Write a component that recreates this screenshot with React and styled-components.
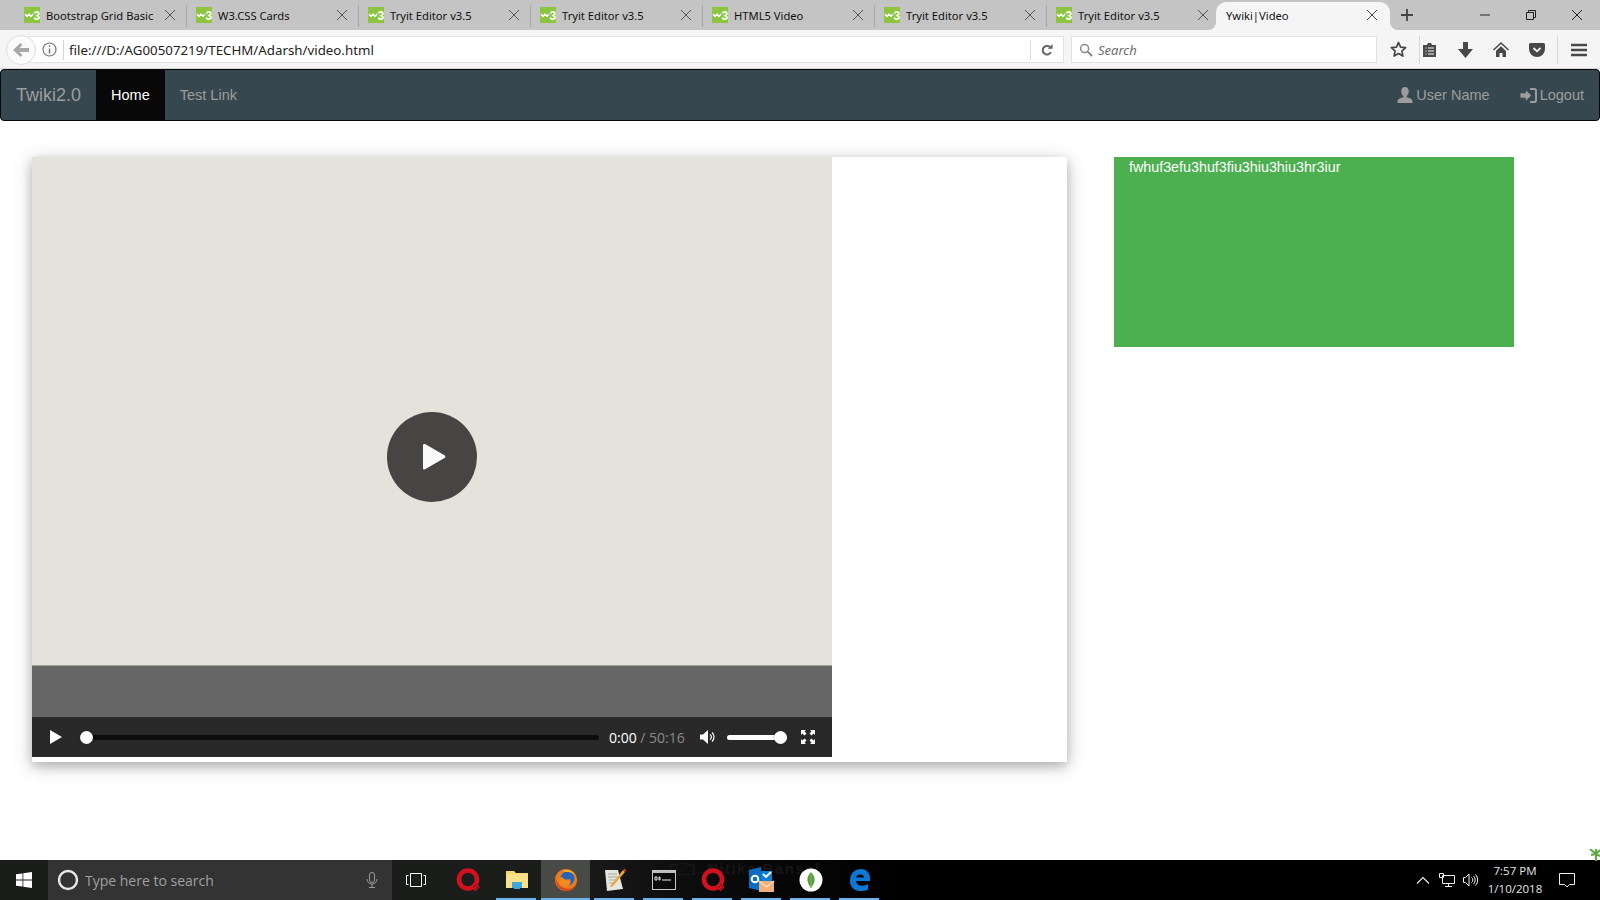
import React from "react";
import styled, { createGlobalStyle } from "styled-components";

const GlobalStyle = createGlobalStyle`
  html, body {
    margin: 0;
    padding: 0;
    background: #fff;
  }
  body {
    font-family: "Liberation Sans", Arial, sans-serif;
    overflow: hidden;
  }
  * { box-sizing: border-box; }
`;

//#region Browser chrome
const Page = styled.div`
  width: 1600px;
  height: 900px;
  display: flex;
  flex-direction: column;
  overflow: hidden;
`;

const TabStrip = styled.div`
  height: 30px;
  flex: none;
  display: flex;
  background: #c4c4c4;
  padding-left: 15px;
`;

const Tab = styled.div`
  width: 172px;
  height: 22px;
  margin-top: 5px;
  flex: none;
  display: flex;
  align-items: center;
  padding: 0 10px 2px 9px;
  font-family: "Noto Sans", sans-serif;
  font-size: 11.2px;
  color: #111;
  border-right: ${(p) => (p.$last ? "none" : "1px solid #a6a6a6")};
`;

const ActiveTab = styled(Tab)`
  width: 174px;
  height: 28px;
  margin: 2px 0 0 -3px;
  padding: 0 12px 2px 4px;
  border-right: none;
  background: #f5f5f5;
  border-radius: 10px 10px 0 0;
  position: relative;
  &::before,
  &::after {
    content: "";
    position: absolute;
    bottom: 0;
    width: 8px;
    height: 8px;
  }
  &::before {
    left: -8px;
    background: radial-gradient(circle at 0 0, transparent 7.5px, #f5f5f5 8.5px);
  }
  &::after {
    right: -8px;
    background: radial-gradient(circle at 100% 0, transparent 7.5px, #f5f5f5 8.5px);
  }
`;

const TabTitle = styled.span`
  margin-left: 6px;
  flex: 1;
  white-space: nowrap;
`;

const Favicon = styled.svg`
  width: 16px;
  height: 16px;
  flex: none;
`;

const NewTab = styled.div`
  width: 34px;
  display: flex;
  align-items: center;
  justify-content: center;
  color: #444;
`;

const WindowButtons = styled.div`
  margin-left: auto;
  display: flex;
`;

const WindowButton = styled.div`
  width: 46px;
  height: 30px;
  display: flex;
  align-items: center;
  justify-content: center;
`;

const Toolbar = styled.div`
  height: 39px;
  flex: none;
  display: flex;
  align-items: center;
  background: #f5f5f5;
  padding: 1px 0 0 6px;
  border-bottom: 1px solid #d8d8d8;
`;

const BackButton = styled.div`
  width: 30px;
  height: 30px;
  flex: none;
  border-radius: 50%;
  border: 1px solid #dedede;
  background: #fbfbfb;
  display: flex;
  align-items: center;
  justify-content: center;
  margin-right: -9px;
  position: relative;
`;

const UrlBar = styled.div`
  width: 1037px;
  height: 27px;
  flex: none;
  display: flex;
  align-items: center;
  background: #fff;
  border: 1px solid #e2e2e2;
  border-left: none;
  padding-left: 15px;
  font-family: "Noto Sans", sans-serif;
  font-size: 13.3px;
  color: #222;
`;

const InfoDivider = styled.span`
  width: 1px;
  height: 20px;
  background: #d5d5d5;
  margin: 0 5px 0 6px;
`;

const UrlText = styled.span`
  flex: 1;
  white-space: nowrap;
`;

const ReloadBox = styled.div`
  width: 33px;
  height: 20px;
  border-left: 1px solid #dcdcdc;
  display: flex;
  align-items: center;
  justify-content: center;
`;

const SearchBar = styled.div`
  width: 306px;
  height: 27px;
  flex: none;
  margin-left: 7px;
  display: flex;
  align-items: center;
  gap: 5px;
  padding-left: 7px;
  background: #fff;
  border: 1px solid #e2e2e2;
  font-family: "Noto Sans", sans-serif;
  font-size: 13px;
  font-style: italic;
  color: #6d6d6d;
`;

const ToolIcon = styled.div`
  width: ${(p) => p.$w || 36}px;
  height: 28px;
  flex: none;
  margin-left: ${(p) => p.$ml || 0}px;
  display: flex;
  align-items: center;
  justify-content: center;
  border-left: ${(p) => (p.$divided ? "1px solid #d6d6d6" : "none")};
`;
//#endregion

//#region Navbar
const Navbar = styled.nav`
  height: 52px;
  flex: none;
  display: flex;
  background: #37474f;
  border: 1px solid #080808;
  border-radius: 4px;
`;

const Brand = styled.a`
  padding: 0 15px;
  font-size: 18px;
  line-height: 50px;
  color: #9d9d9d;
`;

const NavLink = styled.a`
  padding: 0 15px;
  font-size: 14.5px;
  line-height: 50px;
  color: ${(p) => (p.$active ? "#fff" : "#9d9d9d")};
  background: ${(p) => (p.$active ? "#080808" : "transparent")};
  display: flex;
  align-items: center;
  gap: ${(p) => (p.$gap ? "3px" : "0")};
`;

const NavRight = styled.div`
  margin-left: auto;
  display: flex;
`;
//#endregion

//#region Content
const Main = styled.main`
  flex: 1;
  display: flex;
  align-items: flex-start;
  padding: 36px 0 0 32px;
  background: #fff;
`;

const Card = styled.div`
  width: 1035px;
  height: 605px;
  flex: none;
  padding-bottom: 5px;
  background: #fff;
  box-shadow: 0 4px 10px 0 rgba(0, 0, 0, 0.2), 0 4px 20px 0 rgba(0, 0, 0, 0.19);
`;

const Video = styled.div`
  width: 800px;
  height: 600px;
  display: flex;
  flex-direction: column;
  position: relative;
`;

const Poster = styled.div`
  flex: 1;
  background: #e3e2db;
`;

const Band = styled.div`
  height: 52px;
  flex: none;
  background: #666;
  border-top: 1px solid #a3a29b;
`;

const Controls = styled.div`
  height: 40px;
  flex: none;
  display: flex;
  align-items: center;
  padding-left: 18px;
  background: #292929;
  font-family: "Open Sans", sans-serif;
  font-size: 14px;
  color: #fff;
`;

const BigPlay = styled.div`
  position: absolute;
  left: 355px;
  top: 255px;
  width: 90px;
  height: 90px;
  border-radius: 50%;
  background: #474543;
  display: flex;
  align-items: center;
  justify-content: center;
  padding-left: 4px;
`;

const Seek = styled.div`
  width: 519px;
  height: 5px;
  margin-left: 18px;
  border-radius: 3px;
  background: #0c0c0c;
  position: relative;
  flex: none;
`;

const Thumb = styled.span`
  position: absolute;
  top: 50%;
  left: ${(p) => p.$left}px;
  width: 13px;
  height: 13px;
  margin-top: -6.5px;
  border-radius: 50%;
  background: #fff;
  box-shadow: 0 0 2px rgba(0, 0, 0, 0.5);
`;

const Time = styled.span`
  margin-left: 10px;
  white-space: nowrap;
  width: 91px;
`;

const Duration = styled.span`
  color: #8a8a8a;
`;

const Volume = styled.div`
  width: 60px;
  height: 5px;
  margin-left: 11px;
  border-radius: 3px;
  background: #fff;
  position: relative;
  flex: none;
`;

const ControlIcon = styled.svg`
  flex: none;
  margin-left: ${(p) => p.$ml || 0}px;
`;

const Note = styled.div`
  width: 400px;
  height: 190px;
  flex: none;
  margin-left: 47px;
  padding: 0 15px;
  background: #4caf50;
  color: #fff;
  font-size: 14.3px;
  line-height: 20px;
`;
//#endregion

//#region Taskbar
const Taskbar = styled.footer`
  height: 40px;
  flex: none;
  display: flex;
  background: linear-gradient(90deg, #1b1d1b 0, #1b1d1b 560px, #0b0b0b 700px, #000 900px);
  position: relative;
`;

const StartButton = styled.div`
  width: 48px;
  display: flex;
  align-items: center;
  justify-content: center;
  flex: none;
`;

const TaskSearch = styled.div`
  width: 344px;
  flex: none;
  display: flex;
  align-items: center;
  background: #333;
  padding-left: 9px;
  font-family: "Open Sans", sans-serif;
  font-size: 14px;
  color: #a0a0a0;
`;

const SearchHint = styled.span`
  margin-left: 6px;
  flex: 1;
`;

const MicIcon = styled.svg`
  margin-right: 14px;
`;

const TaskItem = styled.div`
  width: 49px;
  flex: none;
  display: flex;
  align-items: center;
  justify-content: center;
  position: relative;
  background: ${(p) => (p.$active ? "#474a47" : "transparent")};
  &::after {
    content: "";
    display: ${(p) => (p.$running ? "block" : "none")};
    position: absolute;
    left: ${(p) => (p.$active ? "0" : "4px")};
    right: ${(p) => (p.$active ? "0" : "5px")};
    bottom: 0;
    height: 2px;
    background: #6cb2eb;
  }
`;

const TaskViewItem = styled(TaskItem)`
  width: 51px;
  padding-right: 4px;
`;

const Watermark = styled.div`
  position: absolute;
  left: 670px;
  top: 2px;
  display: flex;
  align-items: center;
  gap: 12px;
  font-family: "Liberation Sans", sans-serif;
  font-size: 15px;
  font-weight: bold;
  letter-spacing: 1.5px;
  line-height: 13px;
  color: #161616;
`;

const Tray = styled.div`
  margin-left: auto;
  display: flex;
  padding-right: 13px;
`;

const TrayItem = styled.div`
  width: 24px;
  display: flex;
  align-items: center;
  justify-content: center;
`;

const Clock = styled.div`
  width: 64px;
  display: flex;
  flex-direction: column;
  align-items: center;
  justify-content: center;
  font-family: "Open Sans", sans-serif;
  font-size: 11.5px;
  line-height: 18px;
  color: #e6e6e6;
`;

const Notify = styled.div`
  width: 40px;
  display: flex;
  align-items: center;
  justify-content: center;
`;

const Palm = styled.svg`
  position: absolute;
  right: 0;
  top: -11px;
`;
//#endregion

const W3Icon = () => (
  <Favicon viewBox="0 0 16 16">
    <rect width="16" height="16" fill="#8cc63f" />
    <path d="M1 7l2 2.4L5 7l2 2.4L9 7" fill="none" stroke="#fff" strokeWidth="1.3" />
    <text x="9.5" y="12.5" fontSize="12" fontWeight="bold" fontFamily="Liberation Sans" fill="#fff">3</text>
  </Favicon>
);

const OperaIcon = () => (
  <svg width="26" height="26" viewBox="0 0 26 26">
    <circle cx="13" cy="12.5" r="9" fill="none" stroke="#d3111e" strokeWidth="4.6" />
    <rect x="17.5" y="17" width="6" height="6" transform="rotate(45 20.5 20)" fill="#d3111e" />
    <path d="M18.5 20.500l3-3M20.500 22.500l3-3" stroke="#1b1d1b" strokeWidth="0.8" />
  </svg>
);

const FolderIcon = () => (
  <svg width="24" height="24" viewBox="0 0 24 24">
    <path d="M1 3h8l2 2h12v15H1z" fill="#f7d774" />
    <rect x="1" y="6" width="22" height="14" fill="#fbe08a" />
    <path d="M7 20v-6h10v6h-3v-3h-4v3z" fill="#3da7dc" />
    <rect x="9" y="17" width="6" height="4" fill="#3da7dc" />
  </svg>
);

const FirefoxIcon = () => (
  <svg width="24" height="24" viewBox="0 0 24 24">
    <circle cx="12" cy="12" r="11" fill="#ee7a1e" />
    <circle cx="13.500" cy="10.500" r="7" fill="#2a63b3" />
    <path d="M9 3c4-2.500 10-.5 12.500 5-3-3.500-6-4.500-9-4-1.500.3-2.500 0-3.500-1z" fill="#f9b233" />
    <path d="M8 9c2 3 6 3 8 2 2 3-.5 7-4 7.500-4 .5-7-2.500-7-6.500 0-1.500 1-2.500 3-3z" fill="#f28a21" />
    <path d="M1.500 10C1 16 5 22.500 12 23c5 .3 8.500-2.500 10-6-3 3.500-7 4.500-11 3.500C6 19 3 15 1.500 10z" fill="#d9471d" />
  </svg>
);

const NotepadIcon = () => (
  <svg width="24" height="26" viewBox="0 0 24 26">
    <path d="M2 3h13l5 19-16 2z" fill="#e6e6e0" />
    <path d="M5 7h9M5 10h10M6 13h8M6 16h5" stroke="#a9a9a0" strokeWidth="1" />
    <path d="M8 18L20 3l2 2L10 19l-3 1.500z" fill="#e6a83a" />
    <path d="M20 3l1.500-1.500 2 2L22 5z" fill="#c0392b" />
  </svg>
);

const CmdIcon = () => (
  <svg width="24" height="20" viewBox="0 0 24 20">
    <rect x="0.5" y="0.5" width="23" height="19" fill="#0a0a0a" stroke="#c8c8c8" />
    <rect x="1" y="1" width="22" height="2" fill="#bdbdbd" />
    <path d="M3 7h2v3H3zM7 7h1v3H7zM10 10h9" stroke="#e8e8e8" strokeWidth="1" fill="none" />
  </svg>
);

const OutlookIcon = () => (
  <svg width="28" height="28" viewBox="0 0 28 28">
    <path d="M1 4l12-3v24L1 22z" fill="#0a6cc4" />
    <rect x="13" y="5" width="11" height="10" fill="#0f7fd8" />
    <circle cx="7" cy="13" r="3.300" fill="none" stroke="#fff" strokeWidth="2" />
    <path d="M15 8l3 3 5-5" fill="none" stroke="#fff" strokeWidth="1.800" />
    <rect x="11" y="15" width="15" height="11" fill="#f0b27a" />
    <path d="M11 15l7.500 6 7.500-6" fill="none" stroke="#fbe3c8" strokeWidth="1.200" />
  </svg>
);

const MongoIcon = () => (
  <svg width="24" height="24" viewBox="0 0 24 24">
    <circle cx="12" cy="12" r="11.500" fill="#fff" />
    <path d="M12 4c3 3 4 6 3.500 9-.5 3-2 4.500-3.500 7-1.500-2.500-3-4-3.500-7C8 10 9 7 12 4z" fill="#5a9e3e" />
    <path d="M12 5v15" stroke="#8dbb6e" strokeWidth="0.8" />
  </svg>
);

const EdgeIcon = () => (
  <svg width="22" height="24" viewBox="0 0 22 24">
    <path d="M1 13C1 5 6 1 12 1c6 0 9 4.500 9 10v2H7c.2 4.500 6.500 6.500 12 3v5.500c-7 3.500-18 1.500-18-8.500zM7 9.500h8c0-4-7.500-4-8 0z" fill="#0a78d7" fillRule="evenodd" />
  </svg>
);

const tabs = [
  "Bootstrap Grid Basic",
  "W3.CSS Cards",
  "Tryit Editor v3.5",
  "Tryit Editor v3.5",
  "HTML5 Video",
  "Tryit Editor v3.5",
  "Tryit Editor v3.5",
];

const CloseX = ({ color = "#555" }) => (
  <svg width="12" height="12" viewBox="0 0 12 12">
    <path d="M1 1l10 10M11 1L1 11" stroke={color} strokeWidth="1" />
  </svg>
);

const App = () => {
  return (
    <Page>
      <GlobalStyle />
      <TabStrip>
        {tabs.map((title, i) => (
          <Tab key={i} $last={i === tabs.length - 1}>
            <W3Icon />
            <TabTitle>{title}</TabTitle>
            <CloseX />
          </Tab>
        ))}
        <ActiveTab>
          <TabTitle>Ywiki|Video</TabTitle>
          <CloseX color="#444" />
        </ActiveTab>
        <NewTab>
          <svg width="14" height="14" viewBox="0 0 14 14">
            <path d="M7 1v12M1 7h12" stroke="#444" strokeWidth="1.800" />
          </svg>
        </NewTab>
        <WindowButtons>
          <WindowButton>
            <svg width="12" height="12" viewBox="0 0 12 12">
              <path d="M1 6h10" stroke="#222" />
            </svg>
          </WindowButton>
          <WindowButton>
            <svg width="12" height="12" viewBox="0 0 12 12">
              <path d="M1.500 3.500h7v7h-7zM3.500 3.500v-2h7v7h-2" fill="none" stroke="#222" />
            </svg>
          </WindowButton>
          <WindowButton>
            <CloseX color="#222" />
          </WindowButton>
        </WindowButtons>
      </TabStrip>

      <Toolbar>
        <BackButton>
          <svg width="16" height="14" viewBox="0 0 16 14">
            <path d="M7.500 0L9.500 2 6.500 5H16v4H6.500l3 3-2 2L0 7z" fill="#a8a8a8" />
          </svg>
        </BackButton>
        <UrlBar>
          <svg width="15" height="15" viewBox="0 0 15 15">
            <circle cx="7.500" cy="7.500" r="6.500" fill="none" stroke="#777" strokeWidth="1.200" />
            <path d="M7.500 6.500v5M7.500 3.500v1.500" stroke="#777" strokeWidth="1.500" />
          </svg>
          <InfoDivider />
          <UrlText>file:///D:/AG00507219/TECHM/Adarsh/video.html</UrlText>
          <ReloadBox>
            <svg width="12" height="12" viewBox="0 0 14 14">
              <path d="M11.500 5A5 5 0 1 0 11.500 9.500" fill="none" stroke="#666" strokeWidth="2.400" />
              <path d="M8 5.500h5.500V0z" fill="#666" />
            </svg>
          </ReloadBox>
        </UrlBar>
        <SearchBar>
          <svg width="14" height="14" viewBox="0 0 15 15">
            <circle cx="6" cy="6" r="4.300" fill="none" stroke="#888" strokeWidth="1.600" />
            <path d="M9.500 9.500l4.500 4.500" stroke="#888" strokeWidth="2.200" />
          </svg>
          Search
        </SearchBar>
        <ToolIcon $w={42}>
          <svg width="17" height="17" viewBox="0 0 17 17">
            <path d="M8.500 1.500l2.100 4.600 5 .6-3.700 3.400 1 5-4.400-2.500-4.400 2.500 1-5L1.400 6.700l5-.6z" fill="none" stroke="#444" strokeWidth="1.700" strokeLinejoin="round" />
          </svg>
        </ToolIcon>
        <ToolIcon $w={20} $divided>
          <svg width="15" height="16" viewBox="0 0 15 16">
            <path d="M1 3h4l1-2h3l1 2h4v12H1z" fill="#4a4a4a" />
            <path d="M3.500 6h1M3.500 9h1M3.500 12h1M6 6h6M6 9h6M6 12h6" stroke="#f5f5f5" strokeWidth="1.200" />
          </svg>
        </ToolIcon>
        <ToolIcon $ml={8}>
          <svg width="15" height="16" viewBox="0 0 15 16">
            <path d="M5 0h5v7h5l-7.500 9L0 7h5z" fill="#484848" />
          </svg>
        </ToolIcon>
        <ToolIcon>
          <svg width="16" height="15" viewBox="0 0 16 15">
            <path d="M8 0L0 7.500l1 1L8 2l7 6.500 1-1zM3 9l5-4.700L13 9v6H9.500v-4h-3v4H3z" fill="#484848" />
          </svg>
        </ToolIcon>
        <ToolIcon>
          <svg width="16" height="14" viewBox="0 0 16 14">
            <path d="M1.500 0h13A1.500 1.500 0 0 1 16 1.500V6a8 8 0 0 1-16 0V1.500A1.500 1.500 0 0 1 1.500 0z" fill="#484848" />
            <path d="M4.500 5L8 8.300 11.500 5" fill="none" stroke="#f5f5f5" strokeWidth="1.800" />
          </svg>
        </ToolIcon>
        <ToolIcon $w={43} $ml={2} $divided>
          <svg width="16" height="14" viewBox="0 0 16 14">
            <path d="M0 2h16M0 7h16M0 12h16" stroke="#484848" strokeWidth="2.600" />
          </svg>
        </ToolIcon>
      </Toolbar>

      <Navbar>
        <Brand>Twiki2.0</Brand>
        <NavLink $active>Home</NavLink>
        <NavLink>Test Link</NavLink>
        <NavRight>
          <NavLink $gap>
            <svg width="16" height="16" viewBox="0 0 15 15">
              <path d="M7.500 0C10 0 11.200 2 11 4.500c-.1 1.700-.9 3.200-2 4v1.200c2.500.8 5 1.300 5.500 3.300v2H.5v-2c.5-2 3-2.500 5.500-3.300V8.500c-1.100-.8-1.900-2.300-2-4C3.800 2 5 0 7.500 0z" fill="#9d9d9d" />
            </svg>
            User Name
          </NavLink>
          <NavLink $gap>
            <svg width="17" height="15" viewBox="0 0 15 14">
              <path d="M5 2v3H0v4h5v3l5-5z" fill="#9d9d9d" />
              <path d="M9 1h4a1.500 1.500 0 0 1 1.500 1.500v9A1.500 1.500 0 0 1 13 13H9" fill="none" stroke="#9d9d9d" strokeWidth="1.800" />
            </svg>
            Logout
          </NavLink>
        </NavRight>
      </Navbar>

      <Main>
        <Card>
          <Video>
            <Poster />
            <Band />
            <Controls>
              <svg width="12" height="14" viewBox="0 0 12 14">
                <path d="M0 0l12 7-12 7z" fill="#fff" />
              </svg>
              <Seek>
                <Thumb $left={0} />
              </Seek>
              <Time>
                0:00 <Duration>/ 50:16</Duration>
              </Time>
              <ControlIcon width="16" height="14" viewBox="0 0 16 14">
                <path d="M0 4.500h3L8 0v14L3 9.500H0z" fill="#fff" />
                <path d="M10 4.500a3 3 0 0 1 0 5M12 2.500a6 6 0 0 1 0 9" fill="none" stroke="#fff" strokeWidth="1.200" />
              </ControlIcon>
              <Volume>
                <Thumb $left={47} />
              </Volume>
              <ControlIcon $ml={14} width="14" height="14" viewBox="0 0 14 14">
                <path d="M0 0h5L3.500 1.500 5.500 3.500 3.500 5.500 1.500 3.500 0 5zM14 0v5l-1.500-1.500-2 2-2-2 2-2L9 0zM0 14V9l1.500 1.500 2-2 2 2-2 2L5 14zM14 14H9l1.500-1.500-2-2 2-2 2 2L14 9z" fill="#fff" />
              </ControlIcon>
            </Controls>
            <BigPlay>
              <svg width="24" height="28" viewBox="0 0 24 28">
                <path d="M1 2.500c0-1.500 1-2 2.500-1.200l19 11c1.200.8 1.200 2 0 2.800l-19 11C2 27 1 26.500 1 25z" fill="#fafafa" />
              </svg>
            </BigPlay>
          </Video>
        </Card>
        <Note>fwhuf3efu3huf3fiu3hiu3hiu3hr3iur</Note>
      </Main>

      <Taskbar>
        <Watermark>
          <svg width="25" height="12" viewBox="0 0 25 12">
            <path d="M1 2h6l2-2h7l2 2h6v10H1z" fill="none" stroke="#161616" strokeWidth="2" />
          </svg>
          Nitika Bansal
        </Watermark>
        <StartButton>
          <svg width="16" height="16" viewBox="0 0 16 16">
            <path d="M0 2.300l6.500-.9v6.200H0zM7.300 1.300L16 0v7.600H7.300zM0 8.400h6.500v6.200L0 13.700zM7.300 8.400H16V16l-8.700-1.300z" fill="#fff" />
          </svg>
        </StartButton>
        <TaskSearch>
          <svg width="22" height="22" viewBox="0 0 22 22">
            <circle cx="11" cy="11" r="9" fill="none" stroke="#e8e8e8" strokeWidth="2.400" />
          </svg>
          <SearchHint>Type here to search</SearchHint>
          <MicIcon width="12" height="16" viewBox="0 0 12 16">
            <rect x="3.500" y="0.500" width="5" height="10" rx="2.500" fill="none" stroke="#9a9a9a" />
            <path d="M1 7a5 5 0 0 0 10 0M6 12v3M3 15.500h6" fill="none" stroke="#9a9a9a" />
          </MicIcon>
        </TaskSearch>
        <TaskViewItem>
          <svg width="20" height="14" viewBox="0 0 20 14">
            <path d="M4.500.5h11v13h-11zM2.500 2.500H.5v9h2M17.500 2.500h2v9h-2" fill="none" stroke="#fff" />
          </svg>
        </TaskViewItem>
        <TaskItem><OperaIcon /></TaskItem>
        <TaskItem $running><FolderIcon /></TaskItem>
        <TaskItem $running $active><FirefoxIcon /></TaskItem>
        <TaskItem $running><NotepadIcon /></TaskItem>
        <TaskItem $running><CmdIcon /></TaskItem>
        <TaskItem $running><OperaIcon /></TaskItem>
        <TaskItem $running><OutlookIcon /></TaskItem>
        <TaskItem $running><MongoIcon /></TaskItem>
        <TaskItem $running><EdgeIcon /></TaskItem>
        <Tray>
          <TrayItem>
            <svg width="14" height="8" viewBox="0 0 14 8">
              <path d="M1 7.500l6-6 6 6" fill="none" stroke="#eee" strokeWidth="1.200" />
            </svg>
          </TrayItem>
          <TrayItem>
            <svg width="16" height="14" viewBox="0 0 16 14">
              <path d="M3.500 2.500h12v8h-12zM9.500 10.500v3M6 13.500h7M.5.500h4v4h-4z" fill="#000" stroke="#eee" />
            </svg>
          </TrayItem>
          <TrayItem>
            <svg width="16" height="14" viewBox="0 0 16 14">
              <path d="M.5 4.500h2l3.500-3.500v12L2.500 9.500h-2z" fill="none" stroke="#eee" />
              <path d="M8.500 4.500a3 3 0 0 1 0 5M10.500 3a5.500 5.500 0 0 1 0 8M12.500 1.500a8 8 0 0 1 0 11" fill="none" stroke="#eee" />
            </svg>
          </TrayItem>
          <Clock>
            <span>7:57 PM</span>
            <span>1/10/2018</span>
          </Clock>
          <Notify>
            <svg width="16" height="15" viewBox="0 0 16 15">
              <path d="M.5.500h15v11h-5l-2.500 2.500-2.500-2.500h-5z" fill="none" stroke="#eee" />
            </svg>
          </Notify>
        </Tray>
        <Palm width="12" height="12" viewBox="0 0 12 12">
          <path d="M8 12V5M8 5L2 0M8 5l0-5M8 5l4-4M8 5L3 6M8 5l4 2" stroke="#5fa83f" strokeWidth="2" fill="none" />
        </Palm>
      </Taskbar>
    </Page>
  );
};

export default App;
